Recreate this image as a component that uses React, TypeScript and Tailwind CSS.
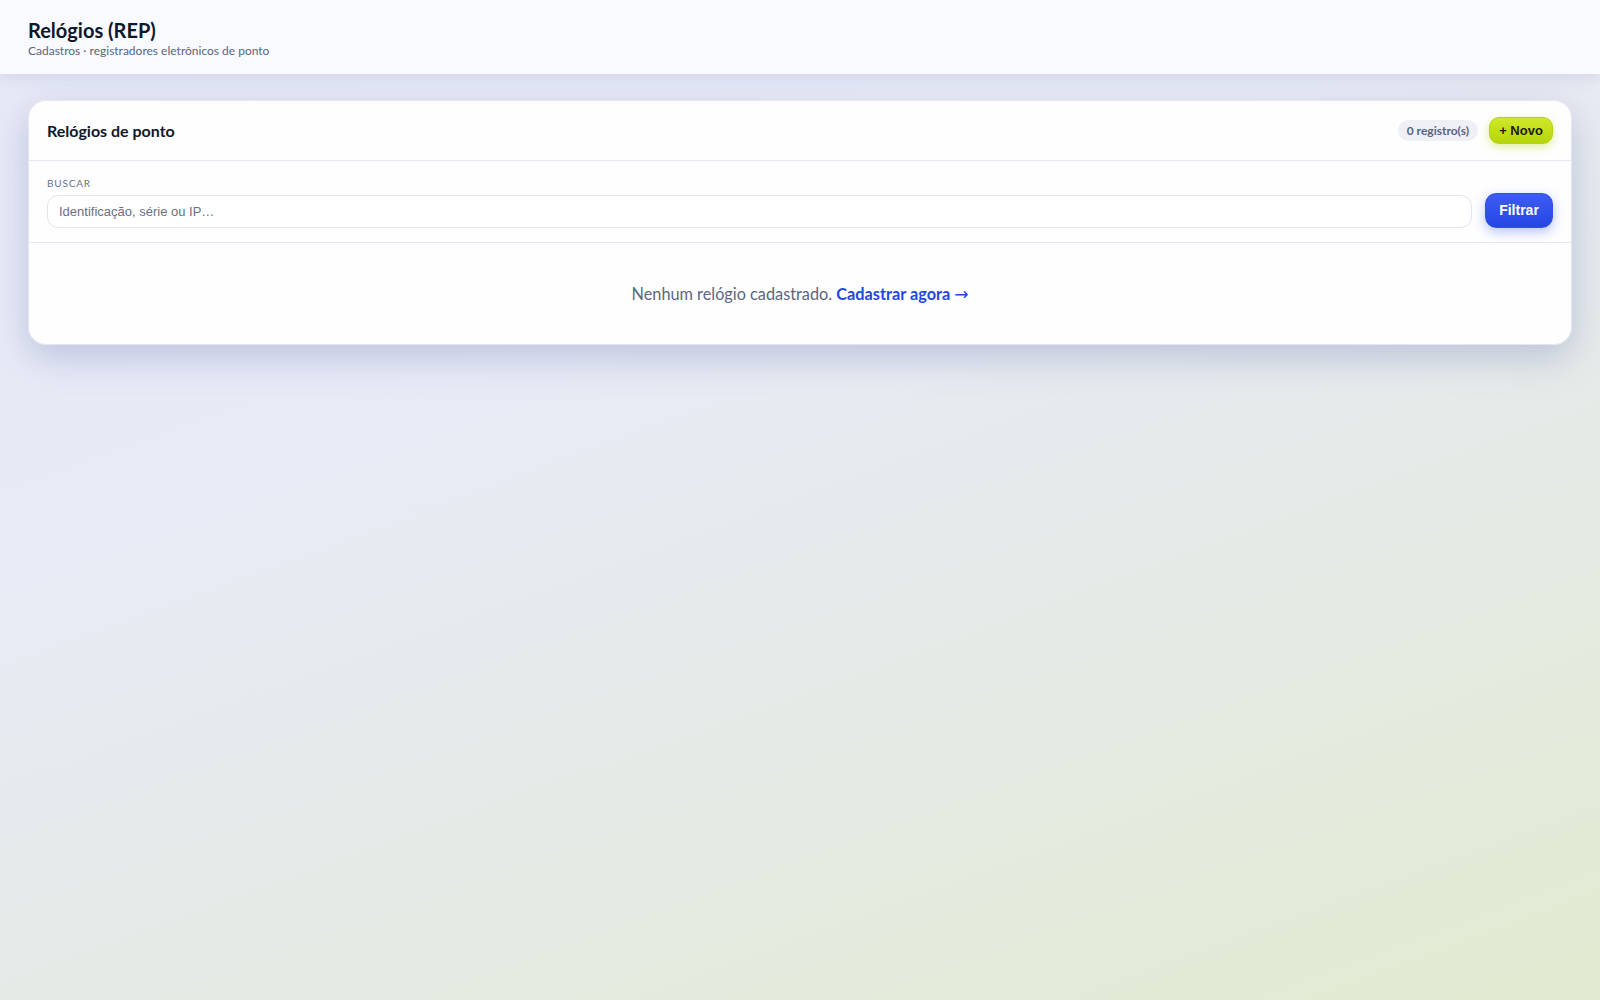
import React, { useState } from 'react';

const App = () => {
  const [query, setQuery] = useState('');

  return (
    <div className="min-h-screen w-full bg-[linear-gradient(160deg,#e6e9f6_0%,#e8ebf6_35%,#e5eae6_65%,#e1ebd0_100%)] font-['Lato',sans-serif] text-[#0f172a]">
      <header className="h-[74px] bg-[#f8faff] px-7 pt-[18px] shadow-[0_2px_16px_rgba(110,125,185,0.22)]">
        <h1 className="text-[20px] font-bold leading-[24px] text-[#0f172a]">Relógios (REP)</h1>
        <p className="mt-[1px] text-[12px] leading-[15px] text-[#5b6480]">Cadastros · registradores eletrônicos de ponto</p>
      </header>

      <main className="px-7 pt-[26px]">
        <section className="rounded-[18px] border border-[#e4e7f1] bg-white/95 shadow-[0_12px_36px_rgba(80,95,165,0.28)]">
          <div className="flex h-[60px] items-center justify-between border-b border-[#e6e8f1] px-[18px]">
            <h2 className="text-[16px] font-bold text-[#111827]">Relógios de ponto</h2>
            <div className="flex items-center gap-[11px]">
              <span className="flex h-[21px] items-center rounded-full bg-[#eef0f6] px-[9px] text-[12px] font-bold text-[#5a6380]">
                0 registro(s)
              </span>
              <button
                type="button"
                className="h-[27px] w-[64px] rounded-[10px] border border-[#b5d20c] bg-[linear-gradient(180deg,#cfe82a,#b6d50a)] font-['Liberation_Sans',Arial,sans-serif] text-[13px] font-bold text-[#1a2200] shadow-[0_3px_10px_rgba(190,220,20,0.45)]"
              >
                + Novo
              </button>
            </div>
          </div>

          <div className="border-b border-[#e6e8f1] px-[18px] pb-[14px] pt-[16px]">
            <label htmlFor="busca" className="block text-[10px] uppercase leading-[12px] tracking-[0.08em] text-[#66708c]">
              Buscar
            </label>
            <div className="mt-[4px] flex items-end gap-[13px]">
              <input
                id="busca"
                type="text"
                value={query}
                onChange={(e) => setQuery(e.target.value)}
                placeholder="Identificação, série ou IP…"
                className="h-[33px] flex-1 rounded-[11px] border border-[#e2e5ee] bg-white px-[11px] font-['Liberation_Sans',Arial,sans-serif] text-[13px] text-[#1f2937] placeholder:text-[#6b7080] focus:outline-none"
              />
              <button
                type="button"
                className="h-[35px] w-[68px] rounded-[11px] border border-[#3050e8] bg-[linear-gradient(180deg,#3d5cf2,#2446e2)] font-['Liberation_Sans',Arial,sans-serif] text-[14px] font-bold text-white shadow-[0_4px_12px_rgba(50,80,240,0.35)]"
              >
                Filtrar
              </button>
            </div>
          </div>

          <div className="pb-[39px] pt-[40px] text-center text-[16.3px] leading-[22px] text-[#5d6682]">
            Nenhum relógio cadastrado.{' '}
            <a href="#" className="font-bold text-[#2447e0]">
              Cadastrar agora <span className="font-['DejaVu_Sans',sans-serif] text-[17px] font-normal">→</span>
            </a>
          </div>
        </section>
      </main>
    </div>
  );
};

export default App;
